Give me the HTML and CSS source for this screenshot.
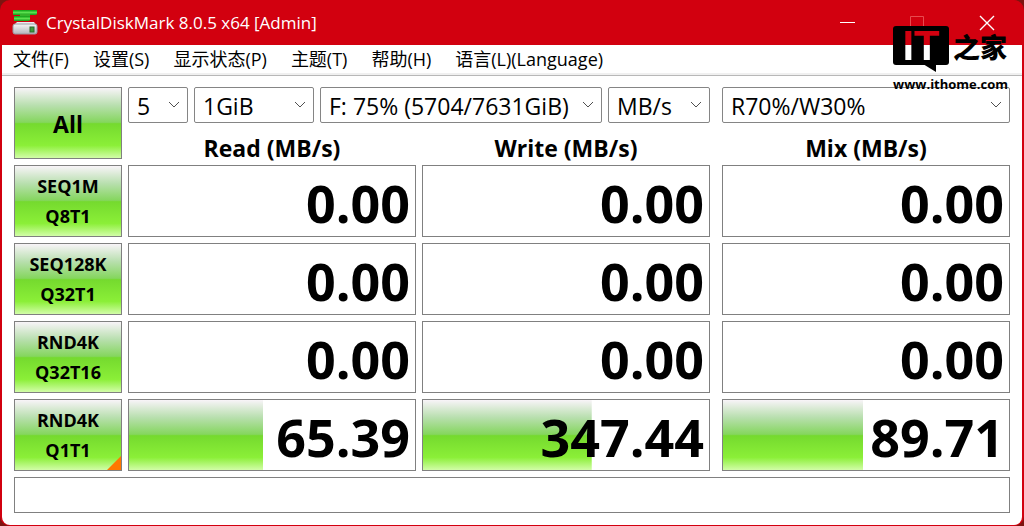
FILE: index.html
```html
<!DOCTYPE html>
<html lang="zh-CN">
<head>
    <meta charset="UTF-8">
    <meta name="viewport" content="width=device-width, initial-scale=1.0">
    <title>CrystalDiskMark 8.0.5 x64 [Admin]</title>
    <link rel="stylesheet" href="styles.css">
</head>
<body>
    <div class="window">
        <header class="titlebar">
            <svg class="app-icon" width="26" height="26" viewBox="0 0 26 26" aria-hidden="true">
                <defs>
                    <linearGradient id="green" x1="0" y1="0" x2="0" y2="1">
                        <stop offset="0" stop-color="#0c9c14"/>
                        <stop offset="0.5" stop-color="#5be04f"/>
                        <stop offset="1" stop-color="#129a18"/>
                    </linearGradient>
                    <linearGradient id="disk" x1="0" y1="0" x2="0" y2="1">
                        <stop offset="0" stop-color="#f6f6f6"/>
                        <stop offset="1" stop-color="#b4b4bc"/>
                    </linearGradient>
                </defs>
                <path d="M1 0h24v4l-1 1H1z" fill="url(#green)"/>
                <path d="M8 4h10v3H8z" fill="#35b32c"/>
                <path d="M2 6h16v4l-1 1H2z" fill="url(#green)"/>
                <path d="M5 12h17l3 4H1z" fill="#ececf0"/>
                <rect x="1" y="14" width="24" height="10" rx="2" fill="url(#disk)" stroke="#9a9aa2"/>
                <rect x="18" y="17" width="4" height="5" fill="#3f9a3c" stroke="#2b6b2b"/>
            </svg>
            <h1>CrystalDiskMark 8.0.5 x64 [Admin]</h1>
            <div class="window-buttons">
                <button type="button" aria-label="最小化">
                    <svg width="16" height="16" viewBox="0 0 16 16"><path d="M1 7.5h15" stroke="#fff"/></svg>
                </button>
                <button type="button" aria-label="最大化" disabled>
                    <svg width="16" height="16" viewBox="0 0 16 16"><path d="M1.5 1.5h13v13h-13z" fill="none" stroke="#e84a4f"/></svg>
                </button>
                <button type="button" aria-label="关闭">
                    <svg width="16" height="16" viewBox="0 0 16 16"><path d="M1 1l14 14M15 1L1 15" stroke="#fff" stroke-width="1.4"/></svg>
                </button>
            </div>
        </header>

        <nav class="menu">
            <a href="#">文件(F)</a>
            <a href="#">设置(S)</a>
            <a href="#">显示状态(P)</a>
            <a href="#">主题(T)</a>
            <a href="#">帮助(H)</a>
            <a href="#">语言(L)(Language)</a>
        </nav>

        <main>
            <table class="bench">
                <thead>
                    <tr>
                        <td class="all"><button type="button" class="run run-all">All</button></td>
                        <td class="options">
                            <select class="count" aria-label="Count"><option>5</option></select>
                            <select class="size" aria-label="Size"><option>1GiB</option></select>
                            <select class="drive" aria-label="Drive"><option>F: 75% (5704/7631GiB)</option></select>
                            <select class="unit" aria-label="Unit"><option>MB/s</option></select>
                        </td>
                        <td class="mix"><select aria-label="Mix"><option>R70%/W30%</option></select></td>
                    </tr>
                    <tr>
                        <th class="read" scope="col">Read (MB/s)</th>
                        <th scope="col">Write (MB/s)</th>
                        <th class="mix" scope="col">Mix (MB/s)</th>
                    </tr>
                </thead>
                <tbody>
                    <tr>
                        <th scope="row"><button type="button" class="run">SEQ1M<br>Q8T1</button></th>
                        <td class="score">0.00</td>
                        <td class="score">0.00</td>
                        <td class="score mix">0.00</td>
                    </tr>
                    <tr>
                        <th scope="row"><button type="button" class="run">SEQ128K<br>Q32T1</button></th>
                        <td class="score">0.00</td>
                        <td class="score">0.00</td>
                        <td class="score mix">0.00</td>
                    </tr>
                    <tr>
                        <th scope="row"><button type="button" class="run">RND4K<br>Q32T16</button></th>
                        <td class="score">0.00</td>
                        <td class="score">0.00</td>
                        <td class="score mix">0.00</td>
                    </tr>
                    <tr>
                        <th scope="row"><button type="button" class="run selected">RND4K<br>Q1T1</button></th>
                        <td class="score" style="--meter: 47%">65.39</td>
                        <td class="score" style="--meter: 59%">347.44</td>
                        <td class="score mix" style="--meter: 49%">89.71</td>
                    </tr>
                </tbody>
            </table>
            <input class="comment" type="text" aria-label="Comment">
        </main>
    </div>

    <!-- site watermark over the window -->
    <div class="watermark">
        <div class="brand">
            <div class="bubble"><span>IT</span></div>
            <div class="brush">之家</div>
        </div>
        <div class="site">www.ithome.com</div>
    </div>
</body>
</html>
```

FILE: styles.css
```css
* {
    box-sizing: border-box;
}

body {
    margin: 0;
    background-color: #7c1410;
    font-family: "Open Sans", "Noto Sans CJK SC", sans-serif;
    color: #000;
}

.window {
    background-color: #d2000f;
    border-radius: 10px;
    padding: 0 2px 1px;
    overflow: hidden;
}

/* title bar */
.titlebar {
    display: flex;
    align-items: center;
    height: 45px;
    padding-left: 10px;
    color: #fff;
}

.titlebar h1 {
    flex: 1;
    margin: 0 0 0 8px;
    font-family: "Open Sans", sans-serif;
    font-size: 17px;
    font-weight: 400;
}

.window-buttons {
    display: flex;
}

.window-buttons button {
    display: flex;
    align-items: center;
    justify-content: center;
    width: 70px;
    height: 45px;
    padding: 0;
    border: none;
    background: none;
}

/* menu */
.menu {
    display: flex;
    gap: 24px;
    height: 31px;
    padding: 0 11px;
    background-color: #fff;
    border-bottom: 1px solid #b8b8b8;
    box-shadow: inset 0 -2px #f0f0f0;
    font-size: 18px;
    line-height: 28px;
}

.menu a {
    color: #000;
    text-decoration: none;
}

main {
    padding: 11px 12px 12px;
    background-color: #fff;
    border-radius: 0 0 8px 8px;
}

/* benchmark table, the empty track widens the gap before Mix */
.bench {
    display: grid;
    grid-template-columns: 108px 1fr 1fr 0 1fr;
    grid-template-rows: 36px 30px;
    grid-auto-rows: 72px;
    gap: 6px;
}

.bench thead,
.bench tbody,
.bench tr {
    display: contents;
}

.bench th,
.bench td {
    padding: 0;
}

.bench .mix {
    grid-column: 5;
}

.bench .all {
    grid-row: span 2;
}

.bench .read {
    grid-column: 2;
}

.bench thead th {
    font-size: 23px;
    line-height: 38px;
}

.options {
    grid-column: 2 / 4;
    display: flex;
    gap: 6px;
}

select {
    appearance: none;
    width: 100%;
    height: 36px;
    padding: 2px 0 0 8px;
    border: 1px solid #858585;
    border-radius: 2px;
    background: #fff url("data:image/svg+xml,%3Csvg xmlns='http://www.w3.org/2000/svg' width='12' height='8' fill='none' stroke='%23505050'%3E%3Cpath d='M1 1l5 5 5-5'/%3E%3C/svg%3E") no-repeat right 7px center;
    font-family: "Open Sans", sans-serif;
    font-size: 23px;
    color: #000;
}

.options .count {
    width: 60px;
}

.options .size {
    width: 120px;
}

.options .drive {
    flex: 1;
}

.options .unit {
    width: 102px;
}

.run {
    position: relative;
    display: block;
    width: 100%;
    height: 72px;
    padding: 0;
    border: 1px solid #808080;
    font-family: "Open Sans", sans-serif;
    font-size: 18px;
    font-weight: 700;
    line-height: 30px;
    color: #000;
}

.run,
.score {
    background: linear-gradient(#f8f4f8 0%, #b8dfae 25%, #85d65e 49%, #75da2e 51%, #8bef38 82%, #d2fda8 100%) no-repeat;
}

.run-all {
    padding-top: 2px;
    font-size: 23px;
}

.selected::after {
    content: "";
    position: absolute;
    right: 0;
    bottom: 0;
    border-left: 14px solid transparent;
    border-bottom: 14px solid #ff7800;
}

.score {
    border: 1px solid #808080;
    background-size: var(--meter, 0) 100%;
    font-size: 52px;
    font-weight: 700;
    line-height: 74px;
    text-align: right;
}

.bench .score {
    padding: 0 5px;
}

.comment {
    display: block;
    width: 100%;
    height: 36px;
    margin-top: 6px;
    border: 1px solid #808080;
    font-size: 21px;
}

/* watermark */
.watermark {
    position: absolute;
    top: 26px;
    right: 16px;
    pointer-events: none;
}

.brand {
    display: flex;
    gap: 4px;
}

.bubble {
    position: relative;
    width: 56px;
    height: 39px;
    border-radius: 3px;
    background-color: #000;
    text-align: center;
}

.bubble::after {
    content: "";
    position: absolute;
    top: 38px;
    left: 30px;
    border-top: 8px solid #000;
    border-left: 13px solid transparent;
}

.bubble span {
    display: block;
    background: linear-gradient(#d2000f 19px, #fff 19px);
    background-clip: text;
    color: transparent;
    font-family: "Liberation Sans", sans-serif;
    font-size: 42px;
    font-weight: 700;
    line-height: 39px;
}

.brush {
    font-family: "Noto Sans CJK SC", sans-serif;
    font-size: 27px;
    font-weight: 900;
    line-height: 42px;
}

.site {
    margin-top: 8px;
    font-size: 13px;
    font-weight: 700;
    line-height: 16px;
}
```
